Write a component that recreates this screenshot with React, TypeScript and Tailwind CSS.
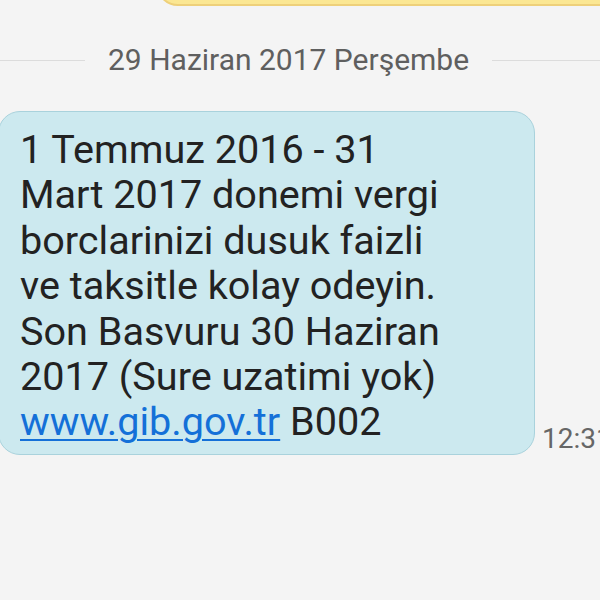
export default function App() {
  return (
    <div
      className="relative h-[600px] w-[600px] overflow-hidden bg-[#f4f4f4]"
      style={{ fontFamily: "Roboto, 'Liberation Sans', sans-serif" }}
    >
      {/* previous bubble peeking from the top */}
      <div className="ml-[156px] -mt-[40px] h-[46px] w-[500px] rounded-[22px] border-2 border-[#eed07a] bg-[#fbe793]" />

      <div className="mt-[39px] flex items-center">
        <div className="h-px w-[85px] bg-[#dcdcdc]" />
        <div className="px-[23px] text-[30px] leading-[30px] text-[#5f5f5f]">29 Haziran 2017 Perşembe</div>
        <div className="h-px flex-1 bg-[#dcdcdc]" />
      </div>

      <div className="mt-[36px] flex items-end">
        <div className="-ml-[2px] w-[537px] shrink-0 rounded-[22px] border border-[#a9d2dc] bg-[#cce9ef] pb-[9px] pl-[21px] pr-[20px] pt-[15px] text-[39.6px] leading-[45.4px] text-[#222]">
          1 Temmuz 2016 - 31
          <br />
          Mart 2017 donemi vergi
          <br />
          borclarinizi dusuk faizli
          <br />
          ve taksitle kolay odeyin.
          <br />
          Son Basvuru 30 Haziran
          <br />
          2017 (Sure uzatimi yok)
          <br />
          <span className="text-[#1470d8] underline decoration-2 underline-offset-4">www.gib.gov.tr</span> B002
        </div>
        <div className="ml-[7px] whitespace-nowrap pb-[2px] text-[28px] leading-none text-[#666]">12:31</div>
      </div>
    </div>
  );
}
